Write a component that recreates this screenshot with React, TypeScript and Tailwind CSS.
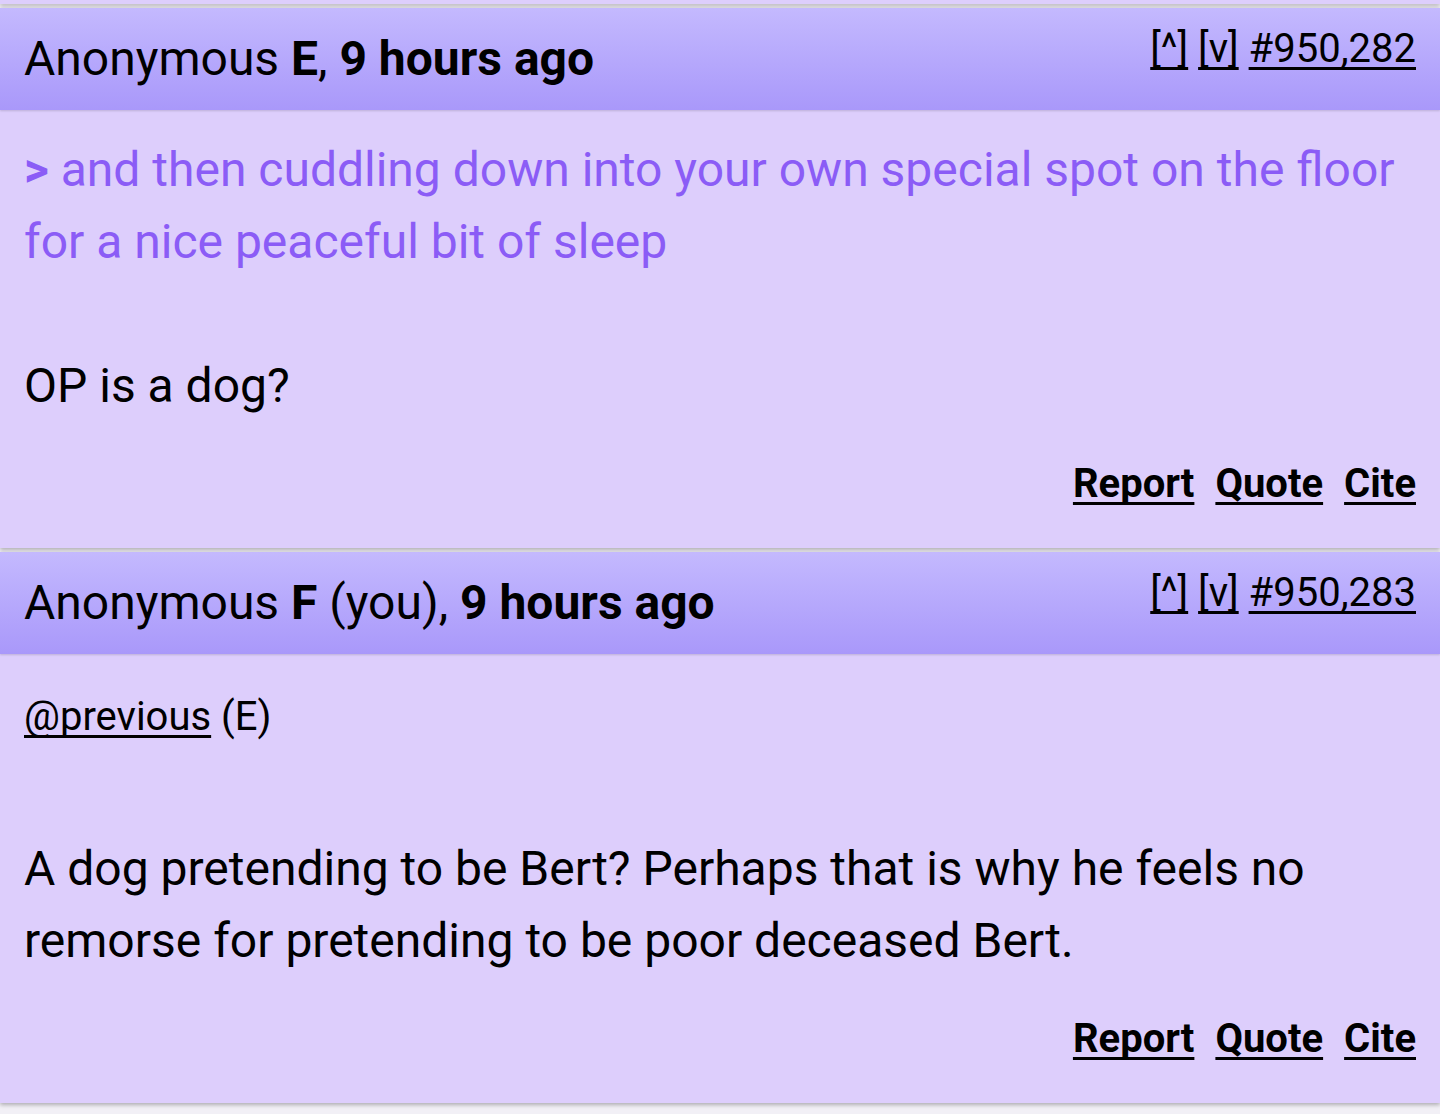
import React from 'react';

type Post = {
  letter: string;
  you?: boolean;
  ago: string;
  num: string;
  body: React.ReactNode;
};

const link = 'underline decoration-[3px] underline-offset-[5px] [text-decoration-skip-ink:none]';

const posts: Post[] = [
  {
    letter: 'E',
    ago: '9 hours ago',
    num: '#950,282',
    body: (
      <>
        <div className="text-[#8b5cf6]">
          <b className="font-bold">&gt;</b> and then cuddling down into your own special spot on the floor for a nice peaceful bit of sleep
        </div>
        <div className="h-[72px]" />
        <div>OP is a dog?</div>
      </>
    ),
  },
  {
    letter: 'F',
    you: true,
    ago: '9 hours ago',
    num: '#950,283',
    body: (
      <>
        <div>
          <span className="text-[40px]">
            <a href="#" className={link}>@previous</a> (E)
          </span>
        </div>
        <div className="h-[80px]" />
        <div>A dog pretending to be Bert? Perhaps that is why he feels no remorse for pretending to be poor deceased Bert.</div>
      </>
    ),
  },
];

function PostCard({ p }: { p: Post }) {
  return (
    <div className="mb-[4px] bg-[#ddcefc] shadow-[0_2px_4px_rgba(0,0,0,0.28)]">
      <div className="flex items-start justify-between bg-gradient-to-b from-[#c4b9fe] to-[#a998fa] px-[24px] py-[15px] shadow-[0_1px_2px_rgba(0,0,0,0.15)]">
        <div className="text-[48px] leading-[72px] text-black">
          Anonymous <b className="font-bold">{p.letter}</b>
          {p.you ? ' (you)' : ''}, <b className="font-bold">{p.ago}</b>
        </div>
        <div className="mt-[6px] shrink-0 text-[40px] leading-[40px] text-black">
          <a href="#" className={link}>[^]</a>{' '}
          <a href="#" className={link}>[v]</a>{' '}
          <a href="#" className={link}>{p.num}</a>
        </div>
      </div>
      <div className="px-[24px] pt-[24px] pb-[38px] text-[48px] leading-[72px] text-black">
        {p.body}
        <div className="mt-[36px] flex justify-end gap-[21px] text-[40px] font-bold leading-[52px]">
          <a href="#" className={link}>Report</a>
          <a href="#" className={link}>Quote</a>
          <a href="#" className={link}>Cite</a>
        </div>
      </div>
    </div>
  );
}

export default function App() {
  return (
    <div className="min-h-[1114px] bg-[#f2f0f6] font-['Roboto',_'Liberation_Sans',_sans-serif]">
      <div className="mb-[4px] h-[4px] bg-[#ddcefc] shadow-[0_2px_4px_rgba(0,0,0,0.28)]" />
      {posts.map((p) => (
        <PostCard key={p.num} p={p} />
      ))}
    </div>
  );
}
